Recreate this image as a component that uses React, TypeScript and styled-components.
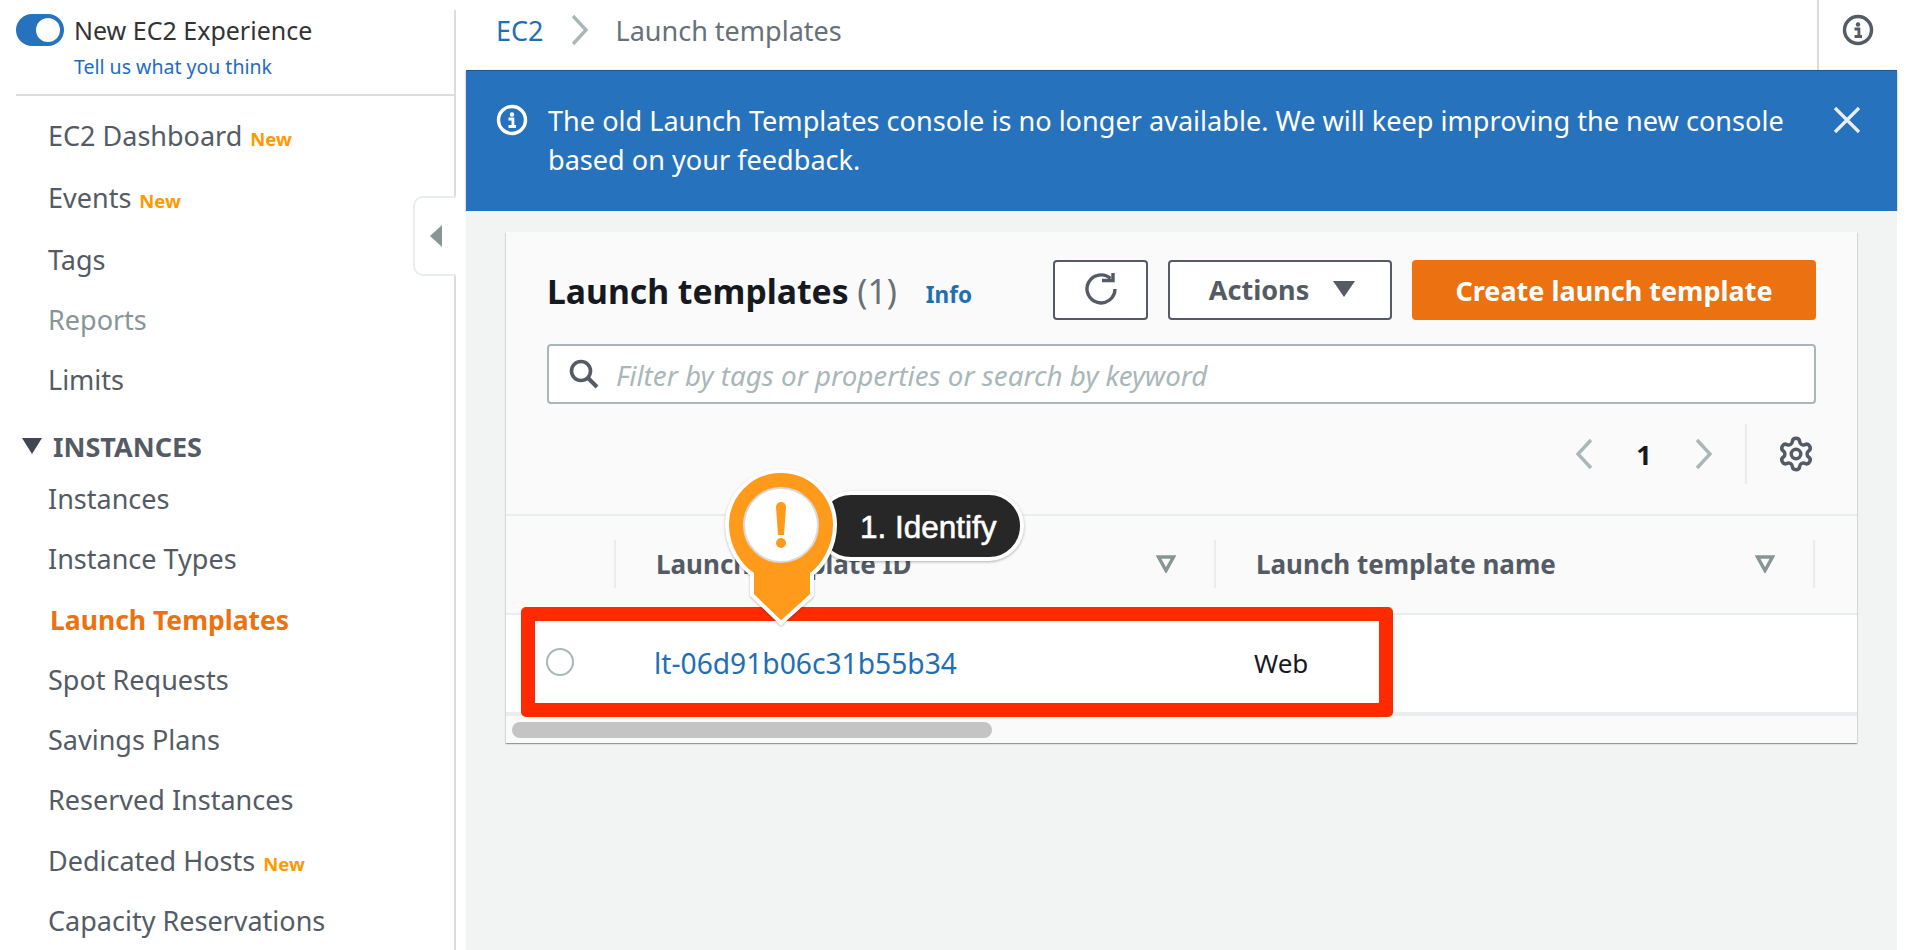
import styled, { createGlobalStyle } from 'styled-components';
import { Settings } from 'lucide-react';

const navTop = [
  { label: 'EC2 Dashboard', isNew: true, step: 62 },
  { label: 'Events', isNew: true, step: 62 },
  { label: 'Tags', step: 60 },
  { label: 'Reports', muted: true, step: 60 },
  { label: 'Limits', step: 60 },
];

const navInstances = [
  { label: 'Instances' },
  { label: 'Instance Types' },
  { label: 'Launch Templates', active: true },
  { label: 'Spot Requests' },
  { label: 'Savings Plans' },
  { label: 'Reserved Instances' },
  { label: 'Dedicated Hosts', isNew: true },
  { label: 'Capacity Reservations' },
];

const InfoIcon = ({ color, size }: { color: string; size: number }) => (
  <svg width={size} height={size} viewBox="0 0 32 32" fill="none">
    <circle cx="16" cy="16" r="13.5" stroke={color} strokeWidth="3.4" />
    <circle cx="16" cy="10.5" r="2.2" fill={color} />
    <path d="M12.5 15h4.4v7M12.5 22.5h7.5" stroke={color} strokeWidth="2.8" />
  </svg>
);

const Chevron = ({ left, color }: { left?: boolean; color: string }) => (
  <svg width="20" height="32" viewBox="0 0 20 32" fill="none">
    <path d={left ? 'M17 2 4 16l13 14' : 'M3 2l13 14L3 30'} stroke={color} strokeWidth="3.4" />
  </svg>
);

const SortIcon = () => (
  <svg width="20" height="18" viewBox="0 0 20 18" fill="none">
    <path d="M2.5 2h15L10 15.5z" stroke="#879596" strokeWidth="3.4" />
  </svg>
);

const App = () => {
  return (
    <Page>
      <GlobalStyle />
      <Sidebar>
        <Experience>
          <Toggle>
            <Knob />
          </Toggle>
          <ExperienceText>
            <ExperienceTitle>New EC2 Experience</ExperienceTitle>
            <Feedback>Tell us what you think</Feedback>
          </ExperienceText>
        </Experience>
        <NavList>
          {navTop.map((item) => (
            <NavItem key={item.label} $step={item.step} $muted={item.muted}>
              {item.label}
              {item.isNew && <NewTag>New</NewTag>}
            </NavItem>
          ))}
        </NavList>
        <SectionTitle>
          <svg width="20" height="16" viewBox="0 0 20 16">
            <path d="M0 0h20L10 16z" fill="#414750" />
          </svg>
          INSTANCES
        </SectionTitle>
        <NavList>
          {navInstances.map((item) => (
            <NavItem key={item.label} $step={60.3} $active={item.active}>
              {item.label}
              {item.isNew && <NewTag>New</NewTag>}
            </NavItem>
          ))}
        </NavList>
        <CollapseTab>
          <svg width="14" height="24" viewBox="0 0 14 24">
            <path d="M13 1v22L1 12z" fill="#879596" />
          </svg>
        </CollapseTab>
      </Sidebar>
      <Main>
        <TopBar>
          <Breadcrumb>
            <CrumbLink>EC2</CrumbLink>
            <Chevron color="#aab7b8" />
            <CrumbCurrent>Launch templates</CrumbCurrent>
          </Breadcrumb>
          <HelpCell>
            <InfoIcon color="#545b64" size={32} />
          </HelpCell>
        </TopBar>
        <Banner>
          <BannerIcon>
            <InfoIcon color="#fff" size={32} />
          </BannerIcon>
          <BannerText>
            The old Launch Templates console is no longer available. We will keep improving the new console based on
            your feedback.
          </BannerText>
          <CloseIcon width="28" height="28" viewBox="0 0 28 28" fill="none">
            <path d="M2 2l24 24M26 2 2 26" stroke="#eaeded" strokeWidth="3.2" />
          </CloseIcon>
        </Banner>
        <Content>
          <Card>
            <CardHeader>
              <TitleRow>
                <Title>
                  Launch templates <Count>(1)</Count>
                </Title>
                <InfoLink>Info</InfoLink>
                <Actions>
                  <OutlineButton $width={95}>
                    <svg width="34" height="34" viewBox="0 0 34 34" fill="none">
                      <path d="M26.5 6.6A14 14 0 1 0 31 17" stroke="#545b64" strokeWidth="3.4" />
                      <path d="M18 8.5h11V1" stroke="#545b64" strokeWidth="3.4" />
                    </svg>
                  </OutlineButton>
                  <OutlineButton $width={224} $shift={4}>
                    Actions
                    <svg width="22" height="16" viewBox="0 0 22 16">
                      <path d="M0 0h22L11 16z" fill="#545b64" />
                    </svg>
                  </OutlineButton>
                  <PrimaryButton>Create launch template</PrimaryButton>
                </Actions>
              </TitleRow>
              <Filter>
                <svg width="30" height="30" viewBox="0 0 30 30" fill="none">
                  <circle cx="12" cy="12" r="9.5" stroke="#545b64" strokeWidth="3.6" />
                  <path d="M18.5 18.5 28 28" stroke="#545b64" strokeWidth="4" />
                </svg>
                <FilterText>Filter by tags or properties or search by keyword</FilterText>
              </Filter>
              <Pager>
                <Chevron left color="#aab7b8" />
                <PageNumber>1</PageNumber>
                <Chevron color="#aab7b8" />
                <PagerDivider />
                <GearIcon size={38} color="#545b64" strokeWidth={2.2} />
              </Pager>
            </CardHeader>
            <Table>
              <HeadRow>
                <SelectCol />
                <HeadCell $width={600}>
                  Launch template ID
                  <SortIcon />
                </HeadCell>
                <HeadCell $width={599}>
                  Launch template name
                  <SortIcon />
                </HeadCell>
              </HeadRow>
              <BodyRow>
                <RadioCell>
                  <Radio />
                </RadioCell>
                <IdCell>lt-06d91b06c31b55b34</IdCell>
                <NameCell>Web</NameCell>
              </BodyRow>
              <ScrollTrack>
                <ScrollThumb />
              </ScrollTrack>
            </Table>
            <Highlight />
            <Callout>
              <CalloutLabel>1. Identify</CalloutLabel>
              <Pin width="120" height="160" viewBox="0 0 120 160">
                <path
                  d="M60 3C30 3 6 27 6 57c0 22 13 41 25 49v21l29 28 31-28v-21c11-8 23-27 23-49C114 27 90 3 60 3z"
                  fill="#ff9a1a"
                  stroke="#fff"
                  strokeWidth="4"
                />
                <circle cx="60" cy="57" r="37" fill="#fff" stroke="#d9d9d9" strokeWidth="2" />
                <path d="M55 39a5 5 0 0 1 10 0l-2 28h-6z" fill="#ff9a1a" />
                <circle cx="60" cy="75" r="5" fill="#ff9a1a" />
              </Pin>
            </Callout>
          </Card>
        </Content>
      </Main>
    </Page>
  );
};

const GlobalStyle = createGlobalStyle`
  html, body {
    margin: 0;
    background: #fff;
  }

  body {
    font-family: "Noto Sans", Roboto, sans-serif;
  }

  * {
    box-sizing: border-box;
  }
`;

const Page = styled.div`
  display: flex;
  width: 1912px;
  height: 950px;
  overflow: hidden;
  background: #fff;
`;

const Sidebar = styled.aside`
  position: relative;
  width: 456px;
  margin-top: 10px;
  margin-right: 10px;
  padding-left: 16px;
  border-right: 2px solid #dcdcdc;
  flex-shrink: 0;
`;

const Experience = styled.div`
  display: flex;
  gap: 11px;
  height: 86px;
  padding-top: 4px;
  border-bottom: 2px solid #dddddd;
`;

const Toggle = styled.div`
  position: relative;
  width: 48px;
  height: 32px;
  border-radius: 16px;
  background: #2672bd;
`;

const Knob = styled.div`
  position: absolute;
  top: 4px;
  right: 4px;
  width: 24px;
  height: 24px;
  border-radius: 50%;
  background: #fff;
`;

const ExperienceText = styled.div`
  display: flex;
  flex-direction: column;
  margin-left: -1px;
  margin-top: -1px;
`;

const ExperienceTitle = styled.div`
  font-size: 25px;
  line-height: 34px;
  color: #333;
`;

const Feedback = styled.div`
  margin-top: 5px;
  font-size: 19.5px;
  line-height: 30px;
  color: #1f6cbf;
`;

const NavList = styled.div`
  display: flex;
  flex-direction: column;
  padding-left: 32px;
  padding-top: 10px;
`;

const NavItem = styled.div<{ $step: number; $muted?: boolean; $active?: boolean }>`
  display: flex;
  align-items: baseline;
  gap: 8px;
  height: ${(p) => p.$step}px;
  padding-left: ${(p) => (p.$active ? 2 : 0)}px;
  line-height: 60px;
  font-size: ${(p) => (p.$active ? 26.5 : 27)}px;
  font-weight: ${(p) => (p.$active ? 700 : 400)};
  color: ${(p) => (p.$active ? '#ec7211' : p.$muted ? '#879596' : '#545b64')};
`;

const NewTag = styled.span`
  font-size: 18.5px;
  font-weight: 700;
  color: #ff9900;
`;

const SectionTitle = styled.div`
  display: flex;
  align-items: center;
  gap: 11px;
  height: 40px;
  margin-top: 16px;
  margin-bottom: -7px;
  padding-left: 6px;
  font-size: 27px;
  font-weight: 700;
  color: #545b64;
`;

const CollapseTab = styled.div`
  position: absolute;
  top: 186px;
  right: -2px;
  display: flex;
  align-items: center;
  justify-content: center;
  width: 43px;
  height: 80px;
  background: #fff;
  border: 2px solid #eaeded;
  border-right: none;
  border-radius: 10px 0 0 10px;
`;

const Main = styled.main`
  display: flex;
  flex-direction: column;
  width: 1431px;
`;

const TopBar = styled.div`
  display: flex;
  align-items: stretch;
  justify-content: space-between;
  height: 70px;
`;

const Breadcrumb = styled.div`
  display: flex;
  align-items: center;
  gap: 26px;
  padding: 0 0 10px 30px;
  font-size: 27px;
`;

const CrumbLink = styled.span`
  color: #1f6fb5;
`;

const CrumbCurrent = styled.span`
  color: #687078;
`;

const HelpCell = styled.div`
  display: flex;
  align-items: center;
  justify-content: center;
  width: 80px;
  padding-bottom: 10px;
  border-left: 2px solid #dcdcdc;
`;

const Banner = styled.div`
  display: flex;
  align-items: flex-start;
  height: 141px;
  padding: 30px 36px 0 30px;
  background: #2772bc;
  border-top: 1px solid #1a5a94;
  box-shadow: 0 1px 2px rgba(0, 0, 0, 0.35);
`;

const BannerIcon = styled.div`
  flex-shrink: 0;
  width: 52px;
  padding-top: 3px;
`;

const BannerText = styled.div`
  flex: 1;
  padding-right: 30px;
  font-size: 27.1px;
  line-height: 39px;
  color: #fff;
`;

const CloseIcon = styled.svg`
  flex-shrink: 0;
  margin-top: 5px;
`;

const Content = styled.div`
  flex: 1;
  padding: 21px 40px 0;
  background: #f2f3f3;
`;

const Card = styled.section`
  position: relative;
  height: 511px;
  background: #fafafa;
  box-shadow:
    0 1px 1px 0 rgba(0, 28, 36, 0.3),
    1px 1px 1px 0 rgba(0, 28, 36, 0.08),
    -1px 1px 1px 0 rgba(0, 28, 36, 0.08);
`;

const CardHeader = styled.div`
  padding: 28px 41px 0;
  height: 282px;
`;

const TitleRow = styled.div`
  display: flex;
  align-items: center;
  height: 60px;
`;

const Title = styled.h2`
  margin: 2px 0 0;
  font-size: 33.7px;
  font-weight: 700;
  color: #16191f;
`;

const Count = styled.span`
  font-weight: 400;
  color: #687078;
`;

const InfoLink = styled.a`
  margin-left: 29px;
  margin-top: 9px;
  font-size: 22.5px;
  font-weight: 700;
  color: #1f6fb5;
`;

const Actions = styled.div`
  display: flex;
  gap: 20px;
  margin-left: auto;
`;

const OutlineButton = styled.button<{ $width: number; $shift?: number }>`
  display: flex;
  align-items: center;
  justify-content: center;
  gap: 24px;
  width: ${(p) => p.$width}px;
  height: 60px;
  padding: 0 0 2px ${(p) => p.$shift ?? 0}px;
  background: #fff;
  border: 2px solid #545b64;
  border-radius: 4px;
  font-family: inherit;
  font-size: 27px;
  font-weight: 700;
  color: #545b64;
`;

const PrimaryButton = styled.button`
  width: 404px;
  height: 60px;
  padding: 0;
  background: #ec7211;
  border: none;
  border-radius: 4px;
  font-family: inherit;
  font-size: 27px;
  font-weight: 700;
  color: #fff;
`;

const Filter = styled.div`
  display: flex;
  align-items: center;
  gap: 17px;
  height: 60px;
  margin-top: 24px;
  padding-left: 20px;
  background: #fff;
  border: 2px solid #aab7b8;
  border-radius: 4px;
`;

const FilterText = styled.span`
  margin-top: 2px;
  font-size: 27.8px;
  font-style: italic;
  color: #aab7b8;
`;

const Pager = styled.div`
  display: flex;
  align-items: center;
  justify-content: flex-end;
  height: 60px;
  margin-top: 20px;
`;

const PageNumber = styled.span`
  width: 100px;
  text-align: center;
  font-size: 27px;
  font-weight: 700;
  color: #16191f;
`;

const PagerDivider = styled.div`
  width: 2px;
  height: 60px;
  margin: 0 30px 0 31px;
  background: #eaeded;
`;

const GearIcon = styled(Settings)`
  margin-right: 1px;
`;

const Table = styled.div`
  display: flex;
  flex-direction: column;
`;

const HeadRow = styled.div`
  display: flex;
  align-items: center;
  height: 101px;
  padding-bottom: 2px;
  border-top: 2px solid #eaeded;
  border-bottom: 2px solid #eaeded;
`;

const SelectCol = styled.div`
  width: 110px;
  height: 48px;
  border-right: 2px solid #eaeded;
`;

const HeadCell = styled.div<{ $width: number }>`
  display: flex;
  align-items: center;
  justify-content: space-between;
  width: ${(p) => p.$width}px;
  height: 48px;
  padding: 0 38px 0 40px;
  border-right: 2px solid #eaeded;
  font-size: 26px;
  font-weight: 700;
  color: #545b64;
`;

const BodyRow = styled.div`
  display: flex;
  align-items: center;
  height: 101px;
  padding-bottom: 1px;
  background: #fff;
  border-bottom: 4px solid #eaeded;
`;

const RadioCell = styled.div`
  display: flex;
  justify-content: flex-end;
  width: 68px;
  margin-top: -2px;
`;

const Radio = styled.div`
  width: 28px;
  height: 28px;
  border: 2px solid #aab7b8;
  border-radius: 50%;
  background: #fff;
`;

const IdCell = styled.div`
  width: 680px;
  padding-left: 80px;
  font-size: 28.2px;
  color: #1f6fb5;
`;

const NameCell = styled.div`
  font-size: 26px;
  color: #16191f;
`;

const ScrollTrack = styled.div`
  padding: 6px 0 0 6px;
`;

const ScrollThumb = styled.div`
  width: 480px;
  height: 16px;
  border-radius: 8px;
  background: #c4c4c4;
`;

const Highlight = styled.div`
  position: absolute;
  left: 15px;
  top: 375px;
  width: 872px;
  height: 110px;
  border: 14px solid #ff2a00;
  border-radius: 5px;
`;

const Callout = styled.div`
  position: absolute;
  left: 215px;
  top: 236px;
  width: 310px;
  height: 160px;
`;

const CalloutLabel = styled.div`
  position: absolute;
  left: 95px;
  top: 23px;
  width: 208px;
  height: 70px;
  padding-left: 40px;
  background: #272727;
  border: 4px solid #fff;
  border-radius: 35px;
  box-shadow: 0 1px 3px rgba(0, 0, 0, 0.3);
  font-family: "Liberation Sans", Arial, sans-serif;
  font-size: 31.5px;
  line-height: 64px;
  -webkit-text-stroke: 0.6px #fff;
  color: #fff;
`;

const Pin = styled.svg`
  position: absolute;
  left: 0;
  top: 0;
  filter: drop-shadow(0 1px 1px rgba(0, 0, 0, 0.25));
`;

export default App;
